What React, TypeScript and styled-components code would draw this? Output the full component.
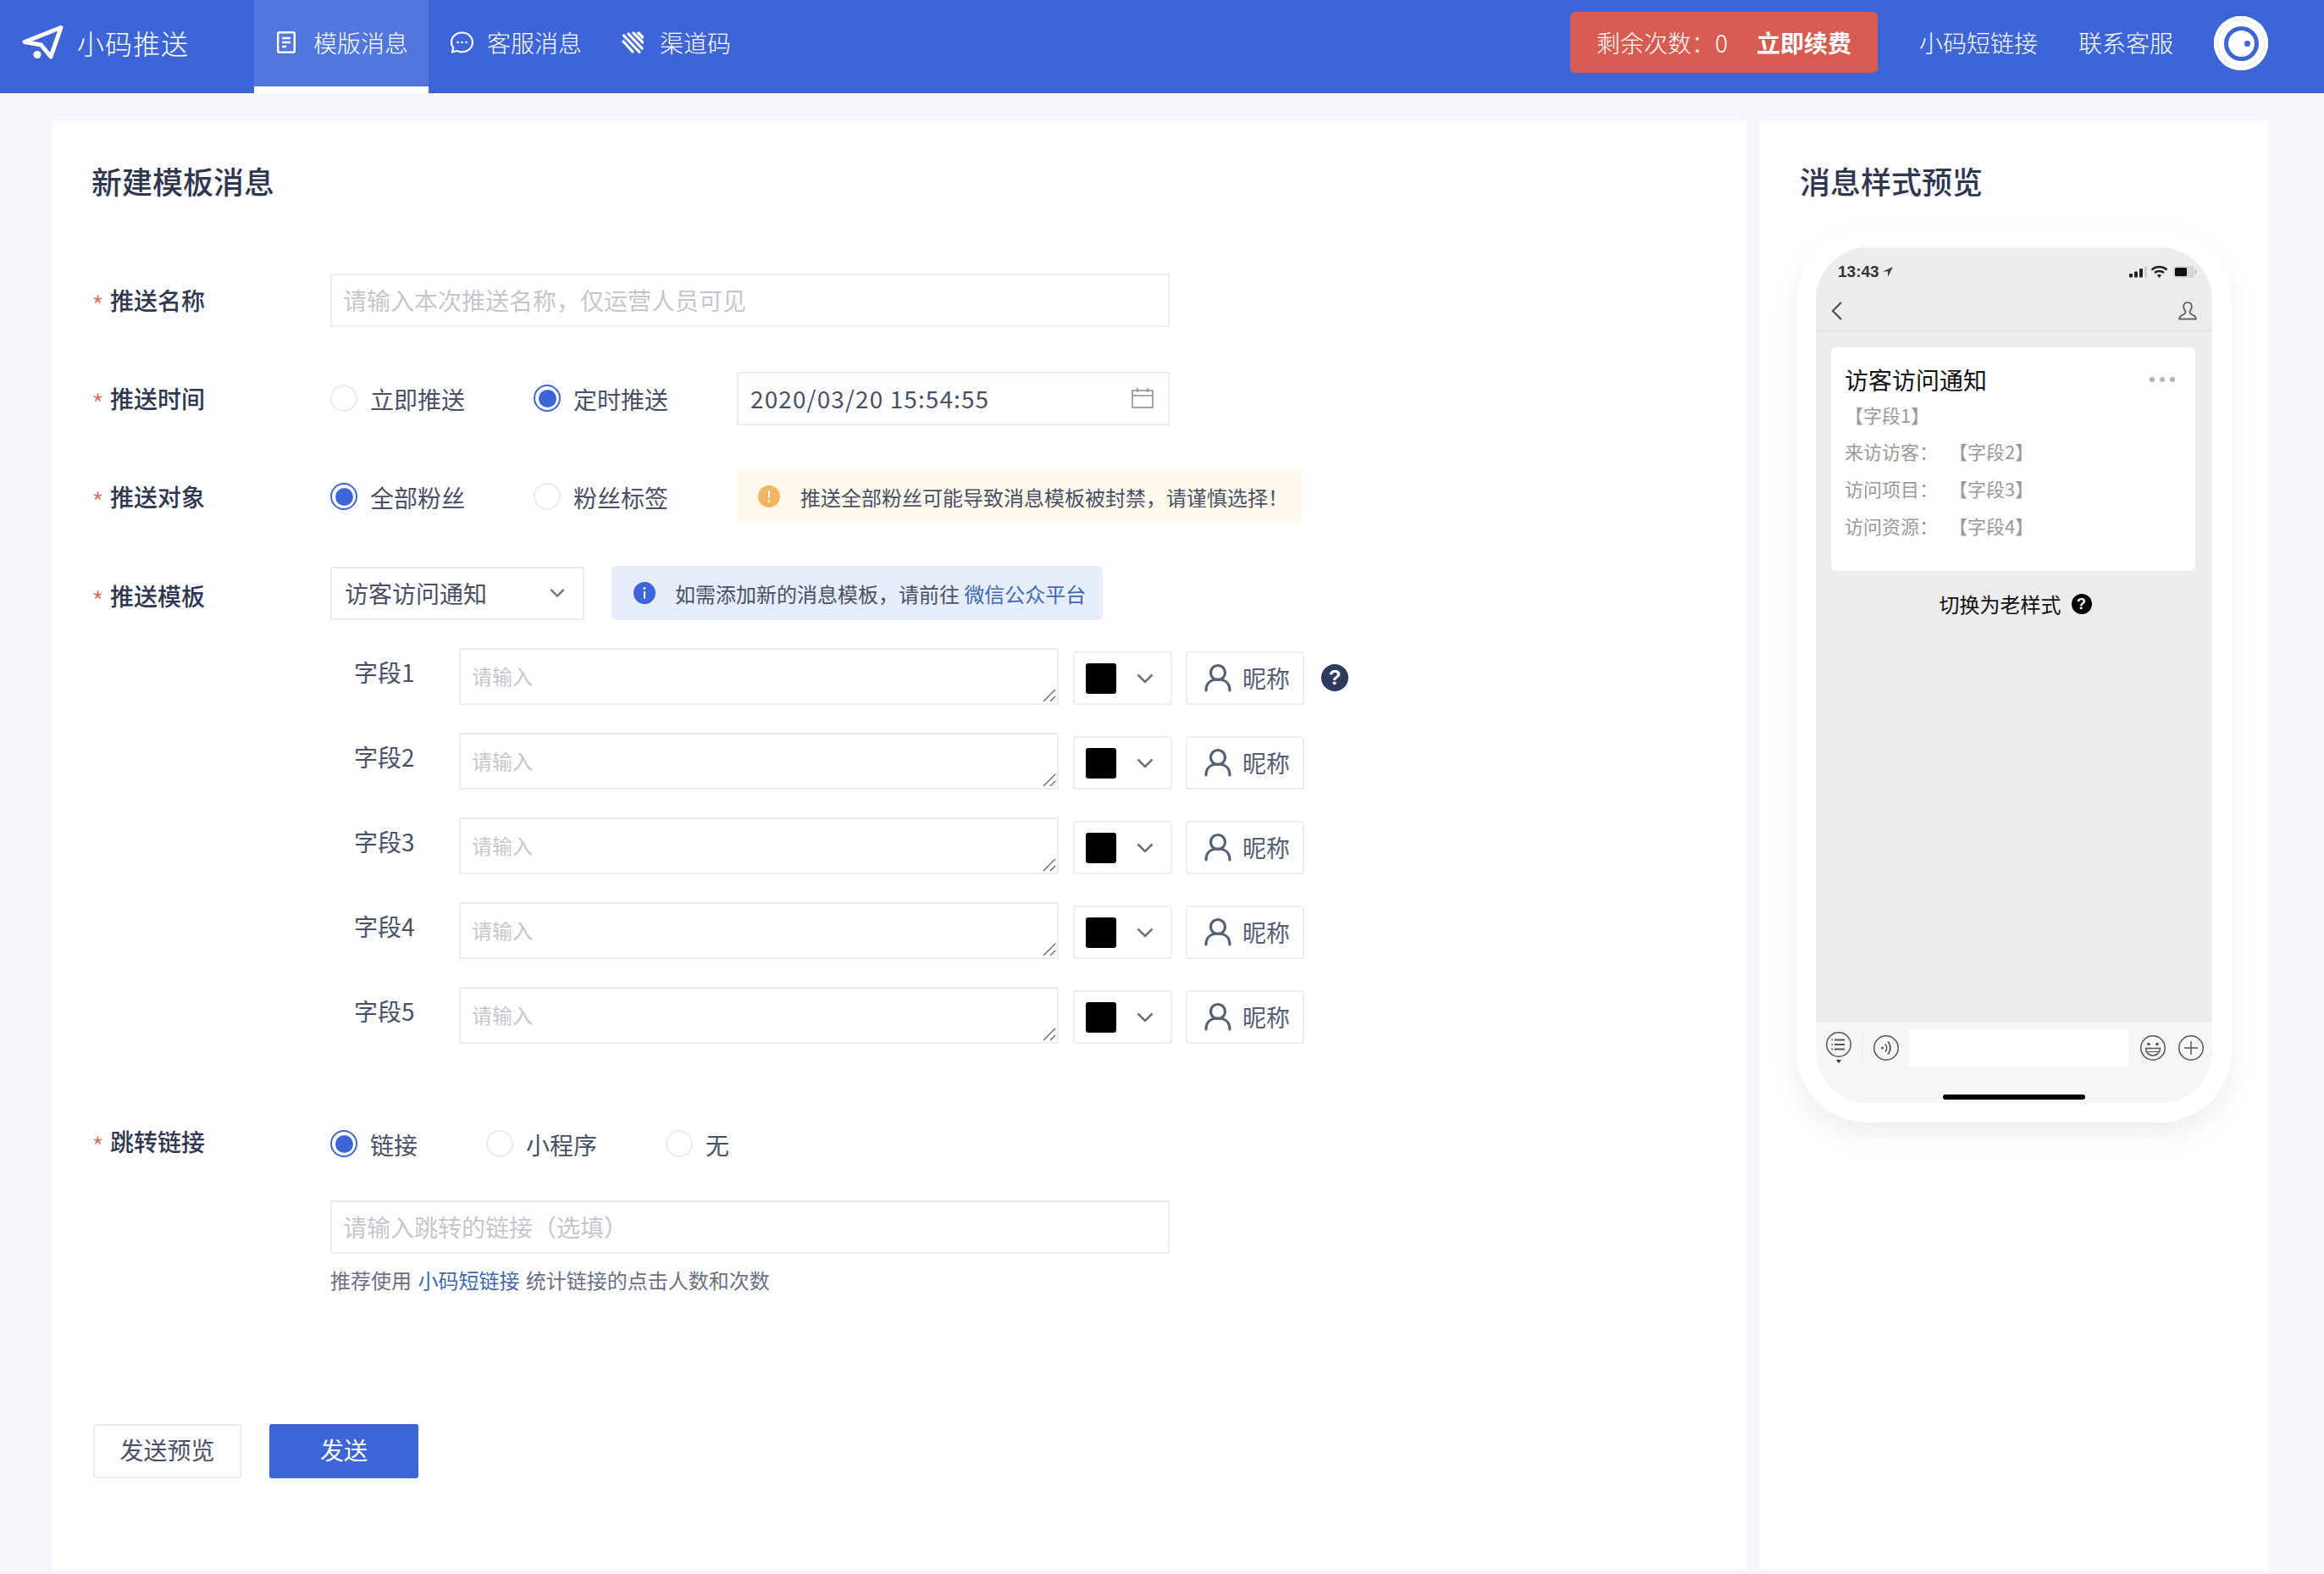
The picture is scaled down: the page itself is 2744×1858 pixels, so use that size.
import React from "react";
import styled, { createGlobalStyle } from "styled-components";

const BLUE = "#3d65d8";
const INK = "#2f3650";
const BODY = "#4a5166";
const FONT = `"Noto Sans CJK SC", "Noto Sans", sans-serif`;

const Global = createGlobalStyle`
  html, body { margin: 0; padding: 0; background: #f5f6fb; }
  body { font-family: ${FONT}; color: ${BODY}; }
  #root { height: 100vh; overflow: hidden; }
  * { box-sizing: border-box; }
  input::placeholder, textarea::placeholder { color: #c5c7cd; opacity: 1; }
`;

const Page = styled.div`display: flex; flex-direction: column; height: 1858px; background: #f5f6fb;`;

const Header = styled.header`
  display: flex; align-items: stretch; height: 110px; flex: none;
  background: ${BLUE}; color: #fff; font-size: 28px;
`;
const Brand = styled.div`
  width: 300px; display: flex; align-items: center; padding: 0 0 10px 26px; gap: 16px;
`;
const BrandName = styled.span`font-size: 32px; line-height: 40px; letter-spacing: 1px; font-weight: 300;`;
const Tab = styled.a<{ $active?: boolean; $w: number; $pad: number; $gap: number }>`
  display: flex; align-items: center; height: 110px; width: ${(p) => p.$w}px; padding: 0 0 2px ${(p) => p.$pad}px;
  gap: ${(p) => p.$gap}px; color: #fff; font-weight: 300;
  background: ${(p) => (p.$active ? "#5176de" : "transparent")};
  border-bottom: 8px solid ${(p) => (p.$active ? "#fff" : "transparent")};
`;
const HeaderRight = styled.div`
  margin-left: auto; display: flex; align-items: center; padding: 0 66px 10px 0; font-weight: 300;
`;
const Quota = styled.div`
  display: flex; align-items: center; width: 363px; height: 72px; padding-left: 31px;
  background: #d85b52; border-radius: 6px; margin-right: 49px;
`;
const QuotaCount = styled.span`width: 189px; white-space: pre;`;
const Renew = styled.strong`font-weight: 700;`;
const HeaderLink = styled.a<{ $gap: number }>`margin-right: ${(p) => p.$gap}px; color: #fff;`;
const Avatar = styled.div`
  width: 64px; height: 64px; border-radius: 50%; background: #fff; margin-top: 2px;
  box-shadow: inset 0 0 0 4px #fff, inset 0 0 0 5px #e6e9f0;
  display: flex; align-items: center; justify-content: center;
`;
const AvatarRing = styled.div`
  width: 41px; height: 41px; border-radius: 50%; border: 5px solid ${BLUE};
  display: flex; align-items: center; justify-content: center;
`;
const AvatarDot = styled.div`width: 7px; height: 7px; border-radius: 50%; background: ${BLUE}; margin-left: 14px;`;

const Main = styled.main`display: flex; gap: 16px; padding: 32px 66px 5px 62px; flex: 1; min-height: 0;`;
const FormCard = styled.section`width: 2000px; background: #fff; padding: 46px 46px 0;`;
const PreviewCard = styled.section`width: 600px; background: #fff; padding: 46px 43px 0;`;
const Title = styled.h2<{ $indent?: number }>`
  margin: 0 0 84px ${(p) => p.$indent ?? 0}px; font-size: 36px; line-height: 50px; font-weight: 500; color: ${INK};
`;
const PreviewTitle = styled(Title)`margin-bottom: 32px;`;

const Row = styled.div<{ $after?: number }>`
  display: flex; align-items: center; height: 64px; margin-bottom: ${(p) => p.$after ?? 52}px;
`;
const Label = styled.label<{ $shift?: number }>`
  width: 282px; flex: none; display: flex; align-items: center; font-size: 28px; line-height: 40px;
  font-weight: 500; color: ${INK};
  margin-top: ${(p) => p.$shift ?? 0}px;
`;
const Star = styled.span`width: 22px; font-size: 34px; line-height: 28px; padding-top: 13px; color: #d8705f; font-weight: 300;`;
const TextInput = styled.input`
  width: 991px; height: 63px; border: 2px solid #ececee; background: #fff; padding: 0 14px 0 13px;
  font: 400 28px ${FONT}; color: ${BODY}; outline: none;
`;
const RadioItem = styled.span<{ $w: number }>`
  display: flex; align-items: center; gap: 15px; width: ${(p) => p.$w}px; flex: none; font-size: 28px; color: ${BODY};
  padding-top: 2px;
`;
const RadioMark = styled.span<{ $on?: boolean }>`
  width: 32px; height: 32px; border-radius: 50%; flex: none; background: #fff; margin-bottom: 2px;
  border: 2px solid ${(p) => (p.$on ? BLUE : "#eaebee")};
  display: flex; align-items: center; justify-content: center;
  &::after { content: ""; width: 21px; height: 21px; border-radius: 50%; background: ${(p) => (p.$on ? BLUE : "transparent")}; }
`;
const Boxed = styled.div<{ $w: number }>`
  width: ${(p) => p.$w}px; height: 63px; border: 2px solid #ececee; flex: none;
  display: flex; align-items: center; justify-content: space-between; padding: 0 17px 0 14px;
  font-size: 28px; color: ${BODY};
`;
const DateText = styled.span`letter-spacing: 1.1px;`;
const SelectBox = styled(Boxed)`padding: 0 21px 0 15px; margin-right: 32px;`;
const Notice = styled.div<{ $bg: string; $w: number; $h: number; $r: number; $pad: number; $gap: number }>`
  display: flex; align-items: center; gap: ${(p) => p.$gap}px; padding-left: ${(p) => p.$pad}px; flex: none;
  width: ${(p) => p.$w}px; height: ${(p) => p.$h}px; background: ${(p) => p.$bg}; border-radius: ${(p) => p.$r}px;
  font-size: 24px; color: ${BODY};
`;
const Link = styled.a`color: #3f68b5;`;

const Fields = styled.div`display: flex; flex-direction: column; gap: 33px; padding-left: 310px; margin-bottom: 86px;`;
const FieldRow = styled.div`display: flex; align-items: flex-end; height: 67px;`;
const FieldLabel = styled.span`
  width: 124px; align-self: flex-start; padding-top: 8px; font-size: 28px; line-height: 40px; color: ${BODY};
`;
const AreaWrap = styled.div`position: relative; width: 708px; height: 67px; flex: none;`;
const FieldArea = styled.textarea`
  width: 708px; height: 67px; resize: none; border: 2px solid #ececee; background: #fff; padding: 15px 13px 0;
  font: 400 24px/32px ${FONT}; outline: none; display: block;
  &::placeholder { color: #c5c7cd; }
`;
const GripMark = styled.svg`position: absolute; right: 3px; bottom: 3px;`;
const ColorPick = styled.div`
  width: 117px; height: 63px; margin-left: 17px; border: 2px solid #eeeef0; border-radius: 3px;
  display: flex; align-items: center; gap: 24px; padding-left: 13px;
`;
const Swatch = styled.span`width: 36px; height: 36px; border-radius: 3px; background: #000;`;
const NickButton = styled.div`
  width: 140px; height: 63px; margin-left: 16px; border: 2px solid #eeeef0; border-radius: 3px;
  display: flex; align-items: center; gap: 13px; padding: 0 0 2px 20px; font-size: 28px; color: #566075;
`;
const HelpDot = styled.span<{ $d: number; $bg: string; $fs: number }>`
  width: ${(p) => p.$d}px; height: ${(p) => p.$d}px; border-radius: 50%; background: ${(p) => p.$bg};
  color: #fff; font: 700 ${(p) => p.$fs}px/${(p) => p.$d}px "Liberation Sans", sans-serif; text-align: center; flex: none;
`;
const FieldHelp = styled(HelpDot)`margin: 0 0 16px 20px;`;
const Hint = styled.p`margin: 14px 0 153px 282px; font-size: 24px; line-height: 34px; color: #6b7182; word-spacing: 2px;`;
const Actions = styled.div`display: flex; gap: 33px; margin-left: 2px;`;
const Btn = styled.button<{ $primary?: boolean }>`
  width: ${(p) => (p.$primary ? 176 : 175)}px; height: 64px; border-radius: 3px; font: 400 28px ${FONT}; padding: 0 0 4px;
  border: ${(p) => (p.$primary ? "none" : "2px solid #ececee")};
  background: ${(p) => (p.$primary ? BLUE : "#fff")}; color: ${(p) => (p.$primary ? "#fff" : BODY)};
`;

const PhoneFrame = styled.div`
  width: 514px; height: 1055px; padding: 22px 23px 23px; background: #fff; border-radius: 84px;
  box-shadow: 0 14px 34px rgba(0, 0, 0, 0.07);
`;
const Screen = styled.div`
  height: 1010px; border-radius: 62px; background: #ececec; overflow: hidden;
  display: flex; flex-direction: column;
`;
const StatusBar = styled.div`
  height: 58px; flex: none; padding: 0 18px 0 26px; display: flex; align-items: center; justify-content: space-between;
  font: 700 19px "Liberation Sans", sans-serif; color: #333;
`;
const Clock = styled.span`display: flex; align-items: center; gap: 4px;`;
const NavBar = styled.div`
  height: 41px; flex: none; display: flex; align-items: flex-start; justify-content: space-between; padding: 6px 18px 0 18px;
  border-bottom: 1px solid #dfdfdf;
`;
const MsgCard = styled.div`
  margin: 19px 20px 0 18px; height: 264px; background: #fff; border-radius: 6px; padding: 18px 16px 0;
`;
const MsgHead = styled.div`display: flex; justify-content: space-between; align-items: center; font-size: 28px; line-height: 40px; color: #111;`;
const Dots = styled.span`display: flex; gap: 6px; margin-right: 8px;`;
const Dot = styled.i`width: 6px; height: 6px; border-radius: 50%; background: #b5b5b5; display: block;`;
const MsgLine = styled.div<{ $h: number }>`
  display: flex; font-size: 22px; line-height: ${(p) => p.$h}px; color: #9a9a9a; height: ${(p) => p.$h}px;
`;
const MsgKey = styled.span`width: 123px;`;
const Toggle = styled.div`
  margin-top: 22px; display: flex; align-items: center; justify-content: center; gap: 12px; padding-left: 3px;
  font-size: 24px; line-height: 34px; color: #111;
`;
const BottomBar = styled.div`margin-top: auto; height: 97px; background: #f6f6f6; border-top: 1px solid #e6e6e6; padding-top: 9px; flex: none;`;
const BarRow = styled.div`display: flex; align-items: center; height: 44px; padding-left: 12px;`;
const BarRule = styled.span`width: 1px; height: 46px; background: #ececec; margin: 0 12px 0 13px;`;
const BarInput = styled.div`width: 260px; height: 44px; background: #fff; border-radius: 4px; margin: 0 14px 0 11px;`;
const BarGap = styled.span`width: 15px;`;
const HomeBar = styled.div`width: 168px; height: 6px; border-radius: 3px; background: #000; margin: 33px auto 0;`;

const Logo = () => (
  <svg width="49" height="40" viewBox="0 0 49 40" fill="none">
    <path d="M46 2.500 3 19.500l19.500 3.500L34 37z" stroke="#fff" strokeWidth="5" strokeLinejoin="round" />
    <circle cx="18" cy="34.500" r="4.500" fill="#fff" />
  </svg>
);
const DocIcon = () => (
  <svg width="22" height="26" viewBox="0 0 22 26" fill="none" stroke="#fff" strokeWidth="2.400">
    <rect x="1.200" y="1.200" width="19.600" height="23.600" rx="1.500" />
    <path d="M6 8h10M6 13h10M6 18h5" />
  </svg>
);
const BubbleIcon = () => (
  <svg width="28" height="26" viewBox="0 0 28 26" fill="none" stroke="#fff" strokeWidth="2.200">
    <path d="M14.500 1.500C7.500 1.500 2 6.500 2 13c0 2.500.8 4.800 2.200 6.700L3 24.500l5.500-1.500c1.800.9 3.800 1.300 6 1.300C21.500 24.300 27 19.300 27 13S21.500 1.500 14.500 1.500z" strokeLinejoin="round" />
    <path d="M9.500 13h.01M14.500 13h.01M19.500 13h.01" strokeWidth="2.600" strokeLinecap="round" />
  </svg>
);
const StripeIcon = () => (
  <svg width="26" height="26" viewBox="0 0 26 26" fill="none" stroke="#fff" strokeWidth="3.200" strokeLinecap="round">
    <path d="M2 12l11 12M2.500 5 21 24.500M8 3l16 17M14 2l11 11" />
    <path d="M20 2l5 5" />
  </svg>
);
const Calendar = () => (
  <svg width="26" height="24" viewBox="0 0 26 24" fill="none" stroke="#8b8f9a" strokeWidth="1.600">
    <rect x="1" y="3" width="24" height="20" />
    <path d="M1 9h24M7 0v5M19 0v5" />
  </svg>
);
const Chevron = ({ w = 20 }: { w?: number }) => (
  <svg width={w} height="12" viewBox="0 0 20 12" fill="none" stroke="#6d7382" strokeWidth="2.600">
    <path d="M1.500 1.500 10 10l8.500-8.500" />
  </svg>
);
const Person = () => (
  <svg width="32" height="34" viewBox="0 0 32 34" fill="none" stroke="#566075" strokeWidth="3.200" strokeLinecap="round">
    <circle cx="16" cy="11" r="8.500" />
    <path d="M2 32c0-7 4-13 14-13s14 6 14 13" />
  </svg>
);
const Warn = () => (
  <svg width="26" height="26" viewBox="0 0 26 26">
    <circle cx="13" cy="13" r="13" fill="#f3b562" />
    <path d="M13 6.500v8" stroke="#fff" strokeWidth="2" />
    <circle cx="13" cy="18.500" r="1.300" fill="#fff" />
  </svg>
);
const Info = () => (
  <svg width="26" height="26" viewBox="0 0 26 26">
    <circle cx="13" cy="13" r="13" fill={BLUE} />
    <circle cx="13" cy="7.500" r="1.400" fill="#fff" />
    <path d="M13 11v8.500" stroke="#fff" strokeWidth="2" />
  </svg>
);
const Grip = () => (
  <GripMark width="16" height="16" viewBox="0 0 16 16" fill="none" stroke="#666" strokeWidth="1.400">
    <path d="M1 15 15 1M9 15l6-6" />
  </GripMark>
);
const LocArrow = () => (
  <svg width="12" height="12" viewBox="0 0 12 12" fill="#444"><path d="M12 0 0 5.500h6V12z" /></svg>
);
const StatusIcons = () => (
  <svg width="80" height="16" viewBox="0 0 80 16">
    <g fill="#222">
      <rect x="0" y="10" width="4" height="4.500" rx="1" />
      <rect x="6" y="7.500" width="4" height="7" rx="1" />
      <rect x="12" y="4" width="4" height="10.500" rx="1" />
    </g>
    <rect x="18" y="1.500" width="3" height="13" fill="#cfcfcf" />
    <path d="M26.500 5.500a13.500 13.500 0 0 1 18 0M30 9a8.500 8.500 0 0 1 11 0" fill="none" stroke="#222" strokeWidth="2.400" />
    <path d="M33 12l2.500 3 2.500-3a3.500 3.500 0 0 0-5 0z" fill="#222" />
    <rect x="52" y="1" width="25" height="14" rx="3.500" fill="#d6d6d6" />
    <rect x="54" y="3" width="14" height="10" rx="1.500" fill="#111" />
    <rect x="77.500" y="5.500" width="2" height="5" rx="1" fill="#bbb" />
  </svg>
);
const Back = () => (
  <svg width="14" height="22" viewBox="0 0 14 22" fill="none" stroke="#444" strokeWidth="2"><path d="M12 1 2 11l10 10" /></svg>
);
const ContactIcon = () => (
  <svg width="22" height="22" viewBox="0 0 22 22" fill="none" stroke="#555" strokeWidth="1.700">
    <path d="M11 1c-3.200 0-4.800 2.300-4.800 5 0 2.500 1.200 4.200 2.200 5.500.5 1.800-.4 3-3.400 4.200-2.500 1-3.800 2-3.800 5h19.600c0-3-1.300-4-3.800-5-3-1.200-3.900-2.400-3.400-4.200 1-1.300 2.200-3 2.200-5.500C15.800 3.300 14.200 1 11 1z" />
  </svg>
);
const MenuGlyph = () => (
  <svg width="30" height="38" viewBox="0 0 30 38" fill="none" stroke="#555" strokeWidth="1.500">
    <circle cx="15" cy="15" r="14.250" />
    <path d="M10 9.500h12M10 15h12M10 20.500h12" strokeWidth="1.800" />
    <path d="M6.500 9.500h1.500M6.500 15h1.500M6.500 20.500h1.500" strokeWidth="1.800" />
    <path d="M12 33h6l-3 4z" fill="#333" stroke="none" />
  </svg>
);
const VoiceGlyph = () => (
  <svg width="30" height="30" viewBox="0 0 30 30" fill="none" stroke="#555" strokeWidth="1.500">
    <circle cx="15" cy="15" r="14.250" />
    <circle cx="10.500" cy="15" r="1.500" fill="#555" stroke="none" />
    <path d="M14 10.500a7 7 0 0 1 0 9M17 7.500a11 11 0 0 1 0 15" strokeWidth="1.700" />
  </svg>
);
const EmojiGlyph = () => (
  <svg width="30" height="30" viewBox="0 0 30 30" fill="none" stroke="#555" strokeWidth="1.500">
    <circle cx="15" cy="15" r="14.250" />
    <circle cx="10" cy="10.500" r="1.800" fill="#555" stroke="none" />
    <circle cx="20" cy="10.500" r="1.800" fill="#555" stroke="none" />
    <path d="M6.500 15.500h17c0 5-3.800 8.500-8.500 8.500s-8.500-3.500-8.500-8.500z" />
    <path d="M8 19.500h14" strokeWidth="1" />
  </svg>
);
const PlusGlyph = () => (
  <svg width="30" height="30" viewBox="0 0 30 30" fill="none" stroke="#555" strokeWidth="1.500">
    <circle cx="15" cy="15" r="14.250" />
    <path d="M15 7v16M7 15h16" />
  </svg>
);

const RequiredLabel = ({ children, shift }: { children: React.ReactNode; shift?: number }) => (
  <Label $shift={shift}><Star>*</Star>{children}</Label>
);
const Radio = ({ on, w, children }: { on?: boolean; w: number; children: React.ReactNode }) => (
  <RadioItem $w={w}><RadioMark $on={on} />{children}</RadioItem>
);

const fields = ["字段1", "字段2", "字段3", "字段4", "字段5"];
const msgLines = [
  ["来访访客：", "【字段2】"],
  ["访问项目：", "【字段3】"],
  ["访问资源：", "【字段4】"],
];

export default function App() {
  return (
    <Page>
      <Global />
      <Header>
        <Brand><Logo /><BrandName>小码推送</BrandName></Brand>
        <Tab $active $w={206} $pad={27} $gap={21}><DocIcon />模版消息</Tab>
        <Tab $w={224} $pad={25} $gap={16}><BubbleIcon />客服消息</Tab>
        <Tab $w={160} $pad={4} $gap={19}><StripeIcon />渠道码</Tab>
        <HeaderRight>
          <Quota><QuotaCount>剩余次数：0</QuotaCount><Renew>立即续费</Renew></Quota>
          <HeaderLink $gap={48}>小码短链接</HeaderLink>
          <HeaderLink $gap={48}>联系客服</HeaderLink>
          <Avatar><AvatarRing><AvatarDot /></AvatarRing></Avatar>
        </HeaderRight>
      </Header>
      <Main>
        <FormCard>
          <Title>新建模板消息</Title>
          <Row>
            <RequiredLabel>推送名称</RequiredLabel>
            <TextInput placeholder="请输入本次推送名称，仅运营人员可见" />
          </Row>
          <Row>
            <RequiredLabel>推送时间</RequiredLabel>
            <Radio w={240}>立即推送</Radio>
            <Radio w={240} on>定时推送</Radio>
            <Boxed $w={511}><DateText>2020/03/20 15:54:55</DateText><Calendar /></Boxed>
          </Row>
          <Row $after={50}>
            <RequiredLabel>推送对象</RequiredLabel>
            <Radio w={240} on>全部粉丝</Radio>
            <Radio w={240}>粉丝标签</Radio>
            <Notice $bg="#fff9ed" $w={667} $h={62} $r={2} $pad={25} $gap={24}><Warn />推送全部粉丝可能导致消息模板被封禁，请谨慎选择！</Notice>
          </Row>
          <Row $after={33}>
            <RequiredLabel shift={6}>推送模板</RequiredLabel>
            <SelectBox $w={300}>访客访问通知<Chevron w={18} /></SelectBox>
            <Notice $bg="#e6ecf9" $w={580} $h={64} $r={6} $pad={26} $gap={23}>
              <Info /><span>如需添加新的消息模板，请前往 <Link>微信公众平台</Link></span>
            </Notice>
          </Row>
          <Fields>
            {fields.map((f, i) => (
              <FieldRow key={f}>
                <FieldLabel>{f}</FieldLabel>
                <AreaWrap>
                  <FieldArea placeholder="请输入" />
                  <Grip />
                </AreaWrap>
                <ColorPick><Swatch /><Chevron /></ColorPick>
                <NickButton><Person />昵称</NickButton>
                {i === 0 && <FieldHelp $d={32} $bg="#2f3a60" $fs={24}>?</FieldHelp>}
              </FieldRow>
            ))}
          </Fields>
          <Row $after={34}>
            <RequiredLabel shift={-6}>跳转链接</RequiredLabel>
            <Radio w={184} on>链接</Radio>
            <Radio w={212}>小程序</Radio>
            <Radio w={80}>无</Radio>
          </Row>
          <Row $after={0}>
            <Label />
            <TextInput placeholder="请输入跳转的链接（选填）" />
          </Row>
          <Hint>推荐使用 <Link>小码短链接</Link> 统计链接的点击人数和次数</Hint>
          <Actions>
            <Btn>发送预览</Btn>
            <Btn $primary>发送</Btn>
          </Actions>
        </FormCard>
        <PreviewCard>
          <PreviewTitle $indent={4}>消息样式预览</PreviewTitle>
          <PhoneFrame>
            <Screen>
              <StatusBar>
                <Clock>13:43<LocArrow /></Clock>
                <StatusIcons />
              </StatusBar>
              <NavBar><Back /><ContactIcon /></NavBar>
              <MsgCard>
                <MsgHead>访客访问通知<Dots><Dot /><Dot /><Dot /></Dots></MsgHead>
                <MsgLine $h={42}>【字段1】</MsgLine>
                {msgLines.map(([k, v]) => (
                  <MsgLine key={k} $h={44}><MsgKey>{k}</MsgKey>{v}</MsgLine>
                ))}
              </MsgCard>
              <Toggle>切换为老样式<HelpDot $d={24} $bg="#000" $fs={18}>?</HelpDot></Toggle>
              <BottomBar>
                <BarRow>
                  <MenuGlyph /><BarRule /><VoiceGlyph /><BarInput /><EmojiGlyph /><BarGap /><PlusGlyph />
                </BarRow>
                <HomeBar />
              </BottomBar>
            </Screen>
          </PhoneFrame>
        </PreviewCard>
      </Main>
    </Page>
  );
}
